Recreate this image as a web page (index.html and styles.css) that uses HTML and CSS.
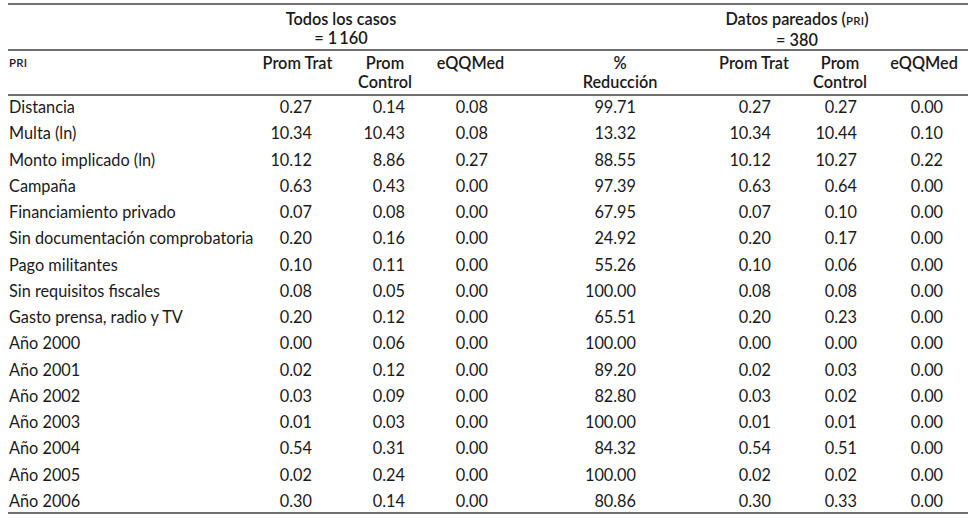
FILE: index.html
```html
<!DOCTYPE html>
<html lang="es">
<head>
<meta charset="utf-8">
<link rel="stylesheet" href="styles.css">
</head>
<body>
<div class="wrap">
<table class="t">
  <colgroup>
    <col class="c0"><col class="c1"><col class="c2"><col class="c3"><col class="c4"><col class="c5"><col class="c6"><col class="c7">
  </colgroup>
  <thead>
    <tr class="grp">
      <th></th>
      <th colspan="3" class="g1">Todos los casos<br>= 1&thinsp;160</th>
      <th></th>
      <th colspan="3" class="g2">Datos pareados (<span class="sc">PRI</span>)<br>= 380</th>
    </tr>
    <tr class="hd">
      <th class="lab"><span class="sc">PRI</span></th>
      <th class="h1">Prom Trat</th>
      <th class="h2">Prom<br>Control</th>
      <th class="h3">eQQMed</th>
      <th class="h4">%<br>Reducción</th>
      <th class="h5">Prom Trat</th>
      <th class="h6">Prom<br>Control</th>
      <th class="h7">eQQMed</th>
    </tr>
  </thead>
  <tbody>
    <tr><td>Distancia</td><td class="n1">0.27</td><td class="n2">0.14</td><td class="n3">0.08</td><td class="n4">99.71</td><td class="n5">0.27</td><td class="n6">0.27</td><td class="n7">0.00</td></tr>
    <tr><td>Multa (ln)</td><td class="n1">10.34</td><td class="n2">10.43</td><td class="n3">0.08</td><td class="n4">13.32</td><td class="n5">10.34</td><td class="n6">10.44</td><td class="n7">0.10</td></tr>
    <tr><td>Monto implicado (ln)</td><td class="n1">10.12</td><td class="n2">8.86</td><td class="n3">0.27</td><td class="n4">88.55</td><td class="n5">10.12</td><td class="n6">10.27</td><td class="n7">0.22</td></tr>
    <tr><td>Campaña</td><td class="n1">0.63</td><td class="n2">0.43</td><td class="n3">0.00</td><td class="n4">97.39</td><td class="n5">0.63</td><td class="n6">0.64</td><td class="n7">0.00</td></tr>
    <tr><td>Financiamiento privado</td><td class="n1">0.07</td><td class="n2">0.08</td><td class="n3">0.00</td><td class="n4">67.95</td><td class="n5">0.07</td><td class="n6">0.10</td><td class="n7">0.00</td></tr>
    <tr><td>Sin documentación comprobatoria</td><td class="n1">0.20</td><td class="n2">0.16</td><td class="n3">0.00</td><td class="n4">24.92</td><td class="n5">0.20</td><td class="n6">0.17</td><td class="n7">0.00</td></tr>
    <tr><td>Pago militantes</td><td class="n1">0.10</td><td class="n2">0.11</td><td class="n3">0.00</td><td class="n4">55.26</td><td class="n5">0.10</td><td class="n6">0.06</td><td class="n7">0.00</td></tr>
    <tr><td>Sin requisitos fiscales</td><td class="n1">0.08</td><td class="n2">0.05</td><td class="n3">0.00</td><td class="n4">100.00</td><td class="n5">0.08</td><td class="n6">0.08</td><td class="n7">0.00</td></tr>
    <tr><td>Gasto prensa, radio y TV</td><td class="n1">0.20</td><td class="n2">0.12</td><td class="n3">0.00</td><td class="n4">65.51</td><td class="n5">0.20</td><td class="n6">0.23</td><td class="n7">0.00</td></tr>
    <tr><td>Año 2000</td><td class="n1">0.00</td><td class="n2">0.06</td><td class="n3">0.00</td><td class="n4">100.00</td><td class="n5">0.00</td><td class="n6">0.00</td><td class="n7">0.00</td></tr>
    <tr><td>Año 2001</td><td class="n1">0.02</td><td class="n2">0.12</td><td class="n3">0.00</td><td class="n4">89.20</td><td class="n5">0.02</td><td class="n6">0.03</td><td class="n7">0.00</td></tr>
    <tr><td>Año 2002</td><td class="n1">0.03</td><td class="n2">0.09</td><td class="n3">0.00</td><td class="n4">82.80</td><td class="n5">0.03</td><td class="n6">0.02</td><td class="n7">0.00</td></tr>
    <tr><td>Año 2003</td><td class="n1">0.01</td><td class="n2">0.03</td><td class="n3">0.00</td><td class="n4">100.00</td><td class="n5">0.01</td><td class="n6">0.01</td><td class="n7">0.00</td></tr>
    <tr><td>Año 2004</td><td class="n1">0.54</td><td class="n2">0.31</td><td class="n3">0.00</td><td class="n4">84.32</td><td class="n5">0.54</td><td class="n6">0.51</td><td class="n7">0.00</td></tr>
    <tr><td>Año 2005</td><td class="n1">0.02</td><td class="n2">0.24</td><td class="n3">0.00</td><td class="n4">100.00</td><td class="n5">0.02</td><td class="n6">0.02</td><td class="n7">0.00</td></tr>
    <tr><td>Año 2006</td><td class="n1">0.30</td><td class="n2">0.14</td><td class="n3">0.00</td><td class="n4">80.86</td><td class="n5">0.30</td><td class="n6">0.33</td><td class="n7">0.00</td></tr>
  </tbody>
</table>
</div>
</body>
</html>
```

FILE: styles.css
```css
html, body {
  margin: 0;
  padding: 0;
  background: #ffffff;
}

.wrap {
  padding: 3px 7px 0 8px;
}

.t {
  width: 960px;
  table-layout: fixed;
  border-collapse: collapse;
  font-family: "Lato", "Open Sans", sans-serif;
  font-size: 16.3px;
  color: #1a1a1a;
}

.c0 { width: 247px; }
.c1 { width: 85px; }
.c2 { width: 90px; }
.c3 { width: 90px; }
.c4 { width: 195px; }
.c5 { width: 85px; }
.c6 { width: 80px; }
.c7 { width: 88px; }

.t th {
  font-weight: 600;
  padding: 0;
  vertical-align: top;
  text-align: center;
}

.grp th {
  border-top: 2px solid #707070;
  border-bottom: 2px solid #707070;
  line-height: 19px;
  height: 38px;
  padding-top: 4px;
  padding-bottom: 0;
}

.grp th.g1 { padding-right: 93px; }
.grp th.g2 { padding-right: 89px; }

.hd th {
  border-bottom: 2px solid #707070;
  line-height: 18.5px;
  height: 37px;
  padding-top: 3px;
  padding-bottom: 0;
}

.hd th.lab {
  text-align: left;
  padding-left: 1px;
  padding-top: 6px;
}

.hd th.lab .sc {
  display: block;
  line-height: 12px;
}

.sc {
  font-size: 11.5px;
  letter-spacing: 0.2px;
}

.hd th.h3 { padding-right: 9px; }
.hd th.h4 { padding-left: 5px; }
.hd th.h5 { padding-right: 7px; }

.t td {
  height: 20px;
  padding: 1px 0 5.27px 0;
  line-height: 20px;
  vertical-align: top;
  white-space: nowrap;
}

.t td:first-child {
  padding-left: 1px;
}

.t tbody tr:last-child td {
  padding-bottom: 1.5px;
  border-bottom: 2px solid #707070;
}

.t td.n1, .t td.n2, .t td.n3, .t td.n4, .t td.n5, .t td.n6, .t td.n7 { text-align: right; }
.t td.n1 { padding-right: 28px; }
.t td.n2 { padding-right: 25px; }
.t td.n3 { padding-right: 32px; }
.t td.n4 { padding-right: 79px; }
.t td.n5 { padding-right: 29px; }
.t td.n6 { padding-right: 23px; }
.t td.n7 { padding-right: 25px; }
```
